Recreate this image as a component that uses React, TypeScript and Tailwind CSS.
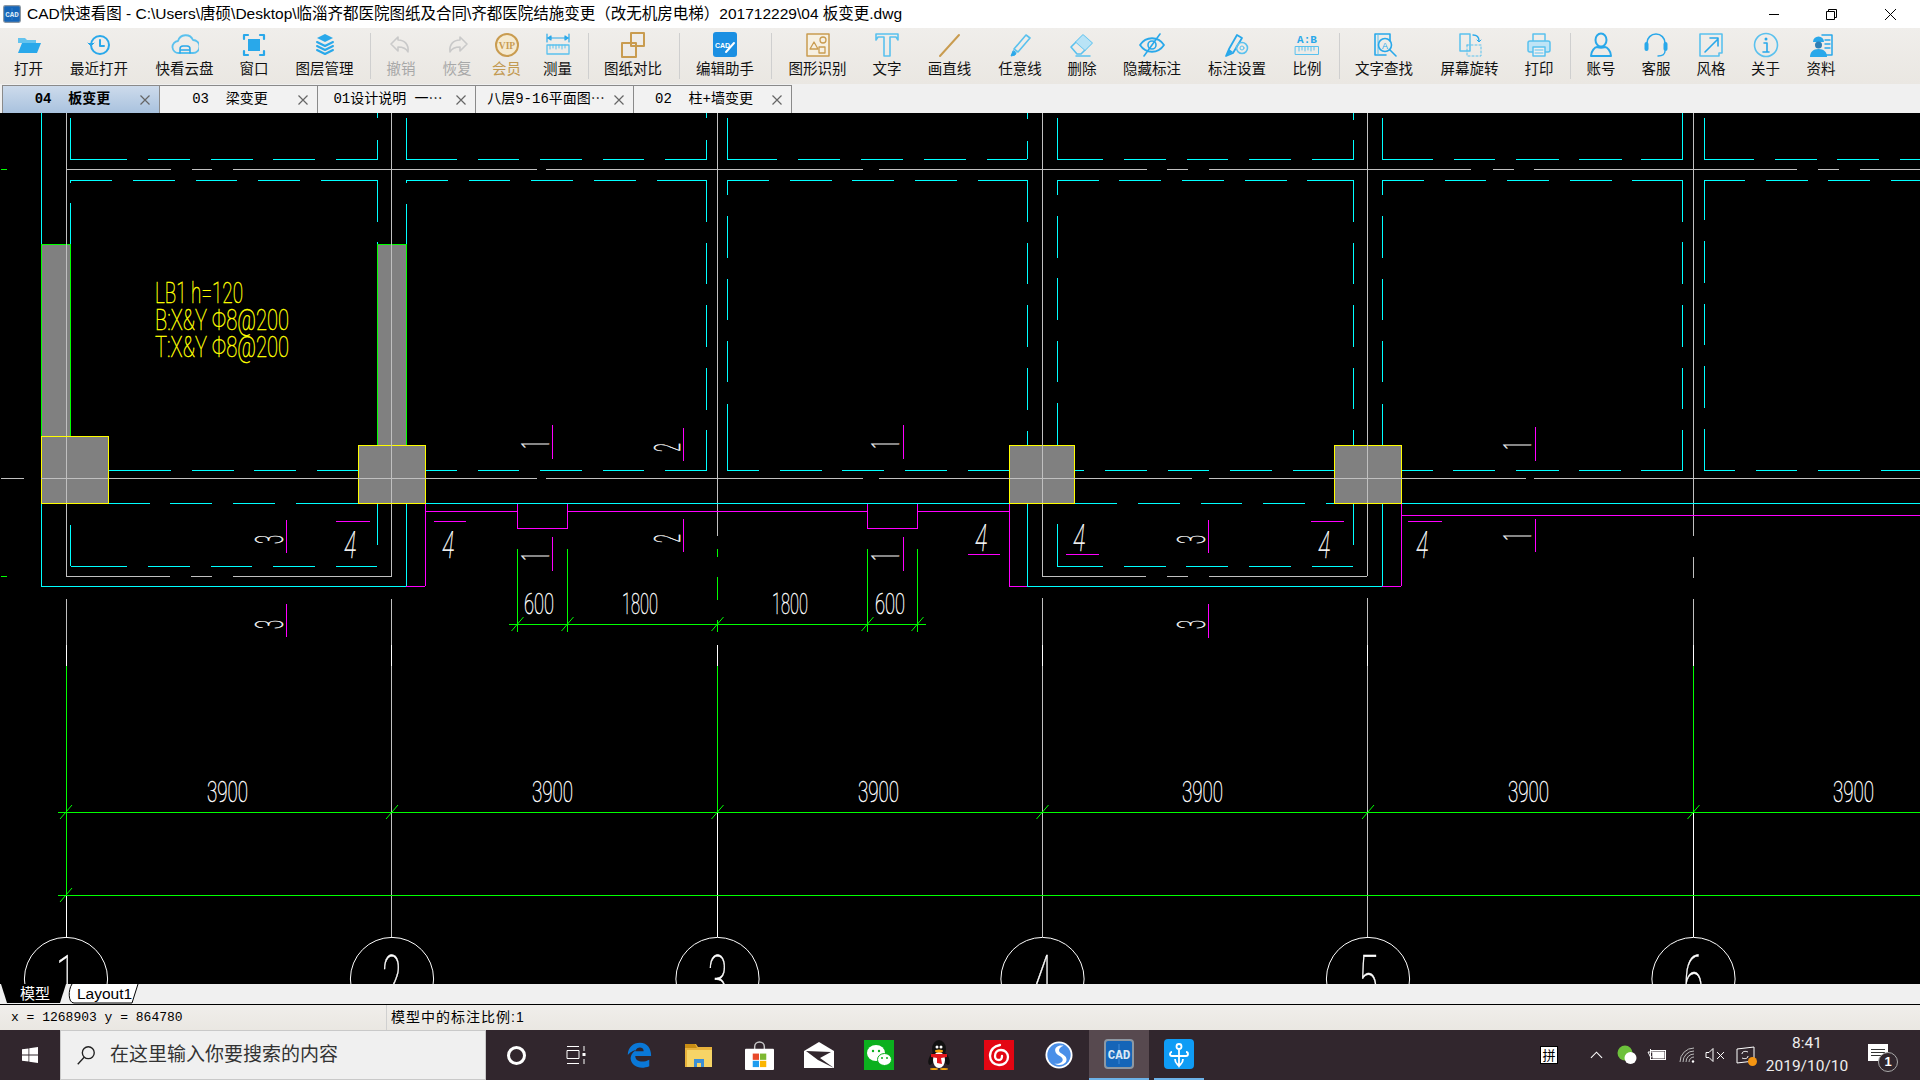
import React from "react";

const C = "#00ffff", G = "#c0c0c0", L = "#00ff00", M = "#ff00ff", W = "#ffffff", Y = "#ffff00";
type Seg = [number, number];
const H: [number, string, Seg[]][] = [
  [159, C, [[70,127],[148,190],[211,253],[273,315],[336,378],[406,457],[478,519],[540,582],[603,644],[665,707],[727,777],[798,840],[861,903],[924,966],[987,1027],[1057,1103],[1124,1166],[1187,1228],[1249,1291],[1312,1354],[1382,1433],[1454,1495],[1516,1559],[1579,1622],[1641,1683],[1704,1754],[1775,1817],[1837,1879],[1900,1920]]],
  [169, G, [[66,171],[192,212],[233,537],[546,863],[879,1147],[1167,1188],[1209,1471],[1493,1514],[1534,1797],[1818,1839],[1860,1920]]],
  [180, C, [[70,112],[133,175],[196,237],[258,300],[321,378],[406,448],[469,510],[531,573],[594,636],[657,707],[727,769],[790,832],[852,894],[915,957],[978,1027],[1057,1099],[1119,1161],[1182,1224],[1245,1287],[1307,1354],[1382,1424],[1445,1486],[1507,1549],[1570,1612],[1632,1683],[1704,1745],[1766,1808],[1828,1870],[1891,1920]]],
  [470, C, [[108,171],[192,234],[254,296],[317,358],[425,457],[478,519],[540,582],[603,644],[665,707],[727,759],[780,822],[842,884],[905,947],[968,1009],[1075,1084],[1105,1147],[1168,1209],[1230,1272],[1293,1334],[1401,1433],[1453,1495],[1516,1559],[1579,1621],[1641,1683],[1704,1735],[1756,1797],[1818,1860],[1881,1920]]],
  [478, G, [[1,24],[45,537],[546,863],[879,1192],[1209,1526],[1534,1920]]],
  [503, C, [[108,150],[170,212],[233,275],[296,358],[425,1009],[1075,1117],[1138,1180],[1201,1242],[1263,1305],[1326,1334],[1401,1920]]],
  [511, M, [[425,517],[567,867],[917,1009]]],
  [515, M, [[1401,1920]]],
  [521, M, [[336,370],[434,466],[1311,1344],[1408,1442]]],
  [528, M, [[517,568],[867,918]]],
  [554, M, [[968,1000],[1066,1099]]],
  [566, C, [[71,127],[148,190],[211,252],[273,315],[336,377],[1057,1103],[1124,1166],[1186,1228],[1249,1291],[1312,1353]]],
  [576, G, [[66,170],[191,212],[233,391],[1042,1146],[1167,1188],[1209,1367]]],
  [586, C, [[41,406],[1027,1382]]],
  [586, M, [[406,425],[1009,1027],[1382,1401]]],
  [169, L, [[1,7]]],
  [576, L, [[1,7]]],
  [624, L, [[509,926]]],
  [812, L, [[58,1920]]],
  [895, L, [[58,1920]]],
];
const V: [number, string, Seg[]][] = [
  [41, C, [[113,244],[503,586]]],
  [66, G, [[113,503],[503,577],[599,645]]],
  [66, W, [[645,666],[895,937]]],
  [66, L, [[666,895]]],
  [70, C, [[118,159],[180,183],[203,244],[525,566]]],
  [377, C, [[113,118],[140,159],[180,222],[242,244],[503,545]]],
  [391, G, [[113,577],[599,645],[666,937]]],
  [391, W, [[645,666]]],
  [406, C, [[118,159],[180,183],[204,244],[503,586]]],
  [425, M, [[503,586]]],
  [517, M, [[503,528]]],
  [567, M, [[503,528]]],
  [867, M, [[503,528]]],
  [917, M, [[503,528]]],
  [706, C, [[113,118],[140,159],[180,222],[243,284],[305,347],[368,410],[430,470]]],
  [727, C, [[118,159],[180,195],[216,258],[279,320],[341,382],[404,445],[430,470]]],
  [717, G, [[113,536]]],
  [717, W, [[645,666],[812,937]]],
  [717, L, [[549,557],[577,600],[620,632],[666,812]]],
  [517, L, [[549,632]]],
  [567, L, [[549,632]]],
  [867, L, [[549,632]]],
  [917, L, [[549,632]]],
  [1009, M, [[503,586]]],
  [1027, C, [[113,119],[141,159],[180,222],[243,284],[305,347],[368,410],[431,445],[503,586]]],
  [1042, G, [[113,576],[598,645],[666,937]]],
  [1042, W, [[645,666]]],
  [1057, C, [[118,159],[180,195],[216,258],[278,320],[341,382],[403,445],[524,566]]],
  [1353, C, [[113,120],[140,159],[180,222],[243,284],[305,347],[368,409],[430,445],[503,545]]],
  [1367, G, [[113,576],[598,645],[666,937]]],
  [1367, W, [[645,666]]],
  [1382, C, [[118,159],[180,195],[216,258],[279,320],[341,382],[404,445],[503,586]]],
  [1401, M, [[503,586]]],
  [1682, C, [[113,159],[180,222],[242,284],[305,347],[368,409],[430,470]]],
  [1693, G, [[113,536],[557,578],[599,645]]],
  [1693, W, [[645,666],[812,937]]],
  [1693, L, [[666,812]]],
  [1704, C, [[118,159],[180,220],[241,283],[304,345],[366,408],[429,470]]],
  [286, M, [[520,553],[604,637]]],
  [552, M, [[425,459],[537,571]]],
  [683, M, [[428,461],[519,552]]],
  [903, M, [[425,459],[537,571]]],
  [1208, M, [[520,553],[604,638]]],
  [1535, M, [[427,461],[519,552]]],
];

function CadText({ x, y, w, h, t, c = W, rot = 0, skew = 0 }: { x: number; y: number; w: number; h: number; t: string; c?: string; rot?: number; skew?: number }) {
  return (
    <text
      transform={`translate(${x} ${y}) rotate(${rot}) skewX(${skew})`}
      fontFamily="Roboto, 'Open Sans', sans-serif"
      fontWeight={100}
      fontSize={h / 0.72}
      textLength={w}
      lengthAdjust="spacingAndGlyphs"
      fill={c}
      stroke={c}
      strokeWidth={0.45}
    >
      {t}
    </text>
  );
}

function Drawing() {
  const grid = [66, 392, 717.5, 1042.5, 1368, 1693.5];
  const ticks: [number, number][] = [[517.5,624],[567.5,624],[717.5,624],[867.5,624],[917.5,624],...grid.map((x) => [x, 812] as [number, number]),[66,895]];
  return (
    <svg viewBox="0 113 1920 871" className="block w-[1920px] h-[871px] bg-black" >
      <g shapeRendering="crispEdges">
        <rect x={41.5} y={244.5} width={29} height={192} fill="#808080" stroke={L} />
        <rect x={377.5} y={244.5} width={29} height={201} fill="#808080" stroke={L} />
        {V.map(([x, c, s], i) => s.map(([a, b], j) => <line key={`v${i}-${j}`} x1={x + 0.5} x2={x + 0.5} y1={a} y2={b} stroke={c} />))}
        {H.map(([y, c, s], i) => s.map(([a, b], j) => <line key={`h${i}-${j}`} y1={y + 0.5} y2={y + 0.5} x1={a} x2={b} stroke={c} />))}
        {[[41.5,436.5,67,67],[358.5,445.5,67,58],[1009.5,445.5,65,58],[1334.5,445.5,67,58]].map(([x,y,w,h]) => (
          <rect key={x} x={x} y={y} width={w} height={h} fill="#808080" stroke={Y} />
        ))}
        {[66.5, 391.5, 1042.5, 1367.5].map((x) => <line key={x} x1={x} x2={x} y1={437} y2={503} stroke={G} />)}
        {[[41,108],[358,426],[1009,1075],[1334,1402]].map(([a,b]) => <line key={a} x1={a} x2={b} y1={478.5} y2={478.5} stroke={G} />)}
      </g>
      {ticks.map(([x, y], i) => <line key={i} x1={x - 6} y1={y + 7} x2={x + 6} y2={y - 7} stroke={L} />)}
      {grid.map((x, i) => (
        <g key={x}>
          <circle cx={x} cy={979} r={41.6} fill="none" stroke={W} />
          <CadText x={x - 10} y={1004} w={20} h={50} t={String(i + 1)} />
        </g>
      ))}
      <CadText x={155} y={303} w={88} h={21} t="LB1 h=120" c={Y} />
      <CadText x={155} y={330} w={134} h={21} t="B:X&Y Φ8@200" c={Y} />
      <CadText x={155} y={357} w={134} h={21} t="T:X&Y Φ8@200" c={Y} />
      <CadText x={524} y={614} w={30} h={21} t="600" />
      <CadText x={622} y={614} w={36} h={21} t="1800" />
      <CadText x={772} y={614} w={36} h={21} t="1800" />
      <CadText x={875} y={614} w={30} h={21} t="600" />
      {[207, 532, 858, 1182, 1508, 1833].map((x) => <CadText key={x} x={x} y={802} w={41} h={21} t="3900" />)}
      {[[549,449],[549,561],[899,449],[899,561],[1531,450],[1531,541]].map(([x,y],i) => <CadText key={`o${i}`} x={x} y={y} w={9} h={28} t="1" rot={-90} />)}
      {[[680,452],[680,543]].map(([x,y],i) => <CadText key={`t${i}`} x={x} y={y} w={9} h={27} t="2" rot={-90} />)}
      {[[283,544],[283,629],[1205,544],[1205,629]].map(([x,y],i) => <CadText key={`m${i}`} x={x} y={y} w={9} h={28} t="3" rot={-90} />)}
      {[[343,558],[441,558],[974,551],[1072,551],[1317,558],[1415,558]].map(([x,y],i) => <CadText key={`f${i}`} x={x} y={y} w={12} h={27} t="4" skew={-6} />)}
    </svg>
  );
}

const B = "#29a8ea", B2 = "#5ac1ee", O = "#c99c50", D = "#c9c9c9";
const Ic = ({ children }: { children: React.ReactNode }) => (
  <svg viewBox="0 0 28 28" className="w-[28px] h-[28px]" fill="none" strokeLinecap="round" strokeLinejoin="round">{children}</svg>
);
const icons: Record<string, React.ReactNode> = {
  open: <><path d="M3 7h7l2 2h9v3H3z" fill="#64c3ee" /><path d="M3 22l4-10h19l-4 10z" fill={B} /></>,
  recent: <><circle cx="15" cy="14" r="9" stroke={B} strokeWidth="2" /><path d="M15 9v6h4" stroke={B} strokeWidth="2" /><path d="M3 12l3 3 3-3" fill={B} stroke={B} /></>,
  cloud: <><path d="M8 22a6 6 0 0 1-1-12 8 8 0 0 1 15-1 6.5 6.5 0 0 1 0 13z" stroke={B2} strokeWidth="1.8" /><path d="M9 22v-4a3 3 0 0 1 3-3h4a3 3 0 0 1 3 3v4M9 19h10" stroke={B} strokeWidth="1.5" /></>,
  win: <><rect x="8" y="8" width="12" height="12" fill={B} /><path d="M4 8V4h4M20 4h4v4M24 20v4h-4M8 24H4v-4" stroke={B} strokeWidth="2.2" /></>,
  layers: <><path d="M14 3l8 4-8 4-8-4z" fill={B} /><path d="M6 11l8 4 8-4M6 15l8 4 8-4M6 19l8 4 8-4" stroke={B} strokeWidth="2" /></>,
  undo: <path d="M11 6L4 13l7 7v-4c5 0 8 1 10 5 1-7-3-12-10-12z" stroke={D} strokeWidth="1.6" />,
  redo: <path d="M17 6l7 7-7 7v-4c-5 0-8 1-10 5-1-7 3-12 10-12z" stroke={D} strokeWidth="1.6" />,
  vip: <><circle cx="14" cy="14" r="11" stroke={O} strokeWidth="2" fill="#f5ead0" /><text x="14" y="17.5" textAnchor="middle" fontSize="9.5" fontWeight="700" fontFamily="'Liberation Serif', serif" fill={O}>VIP</text></>,
  measure: <><path d="M3 3v8M25 3v8M4 7h20M4 7l3-2v4zM24 7l-3-2v4z" stroke={B} strokeWidth="1.2" /><path d="M3 14h22v9H3z" stroke={B2} strokeWidth="1.3" /><path d="M6 14v4M9 14v3M12 14v4M15 14v3M18 14v4M21 14v3" stroke={B2} /></>,
  compare: <><rect x="12" y="2" width="13" height="13" stroke={O} strokeWidth="2" /><rect x="3" y="12" width="14" height="14" stroke={O} strokeWidth="2" /></>,
  edit: <><rect x="2" y="1" width="24" height="25" rx="3" fill="#1b8fe2" /><text x="11.5" y="16.5" textAnchor="middle" fontSize="7" fontWeight="700" fontFamily="'Liberation Sans', sans-serif" fill="#fff">CAD</text><path d="M15 21l8-9" stroke="#fff" strokeWidth="2" /></>,
  shape: <><rect x="3" y="3" width="22" height="22" stroke={O} strokeWidth="1.5" fill="#f6f0e2" /><path d="M10 11l4 7H6z" stroke={O} strokeWidth="1.3" /><circle cx="19" cy="9" r="3" stroke={O} strokeWidth="1.3" /><rect x="15" y="16" width="6" height="6" stroke={O} strokeWidth="1.3" /></>,
  text: <path d="M3 3h22v6l-2-3h-6v19h-6V6H5L3 9z" stroke={B2} strokeWidth="1.6" />,
  line: <path d="M4 25L23 4" stroke={O} strokeWidth="2" />,
  pen: <><path d="M8 18L20 4l4 3-12 14z" stroke={B2} strokeWidth="1.6" /><path d="M7 20l-2 5 4-1 1-2z" fill={B} stroke={B} /></>,
  erase: <><path d="M3 16L15 4l9 8-11 11H9z" stroke={B2} strokeWidth="1.6" /><path d="M8 11l9 8M8 25h14" stroke={B2} strokeWidth="1.5" /><path d="M15 4l9 8-7 7-9-8z" fill="#b9e3f6" /></>,
  eye: <><path d="M2 14c6-9 18-9 24 0-6 9-18 9-24 0z" stroke={B} strokeWidth="1.8" /><circle cx="14" cy="14" r="4" stroke={B} strokeWidth="1.6" /><path d="M6 25L22 3" stroke={B} strokeWidth="1.6" /></>,
  penGear: <><path d="M3 25l3-7 8-14 5 3-9 15z" stroke={B} strokeWidth="1.8" /><path d="M3 25l3-7 4 3z" fill={B} /><circle cx="19" cy="17" r="5.5" stroke={B2} strokeWidth="1.6" /><circle cx="19" cy="17" r="2" stroke={B2} /></>,
  ratio: <><text x="14" y="12" textAnchor="middle" fontSize="11" fontWeight="700" fontFamily="'Liberation Mono', monospace" fill={B}>A:B</text><rect x="2.5" y="15.5" width="23" height="8" stroke={B2} /><path d="M6 16v4M9 16v3M12 16v4M15 16v3M18 16v4M21 16v3" stroke={B2} /></>,
  find: <><path d="M5 3h15v7M5 3v21h11" stroke={B} strokeWidth="1.6" /><path d="M8 3v21" stroke={B2} /><circle cx="15" cy="14" r="6.5" stroke={B} strokeWidth="1.6" /><text x="15" y="17.5" textAnchor="middle" fontSize="9" fontFamily="'Liberation Sans', sans-serif" fill={B}>A</text><path d="M20 19l6 6" stroke={B} strokeWidth="1.6" /></>,
  rotate: <><rect x="4" y="3" width="10" height="17" stroke={B2} strokeWidth="1.5" /><path d="M11 14h14v11H11z" stroke={B2} strokeDasharray="2 2" /><path d="M17 4c4 0 6 2 6 6" stroke={B} strokeWidth="1.4" /><path d="M21 9l2 2 2-2" stroke={B} /></>,
  print: <><path d="M8 10V3h12v7" stroke={B2} strokeWidth="1.5" /><rect x="3" y="10" width="22" height="11" rx="2" fill="#bfe4f6" stroke={B2} strokeWidth="1.5" /><rect x="8" y="16" width="12" height="9" fill="#f0f0f0" stroke={B2} strokeWidth="1.5" /><path d="M10 19h8M10 22h8" stroke={B2} /></>,
  user: <><ellipse cx="14" cy="9" rx="5.5" ry="6.5" stroke={B} strokeWidth="2" /><path d="M4 25c0-5 4-9 6-9 3 1 5 1 8 0 2 0 6 4 6 9z" stroke={B} strokeWidth="2" /></>,
  head: <><path d="M5 14V12a9 9 0 0 1 18 0v2" stroke={B} strokeWidth="1.6" /><rect x="2.5" y="11" width="4" height="9" rx="2" fill={B} /><rect x="21.5" y="11" width="4" height="9" rx="2" fill={B} /><path d="M23 20c0 3-2 5-7 5" stroke={B} strokeWidth="1.4" /></>,
  style: <><path d="M3 3h22v19h-3M3 3v22h19v-3" stroke={B2} strokeWidth="1.6" /><path d="M8 21L21 8M13 7h8v8" stroke={B} strokeWidth="1.6" /></>,
  info: <><circle cx="14" cy="14" r="11.5" stroke={B2} strokeWidth="1.6" /><circle cx="14" cy="8" r="1.5" fill={B} /><path d="M12 12h3v9M11 21h6" stroke={B} strokeWidth="1.6" /></>,
  worker: <><path d="M15 4h10v20H16" stroke={B} strokeWidth="1.5" /><path d="M18 9h5M18 13h5M18 17h5" stroke={B} strokeWidth="1.4" /><path d="M6 11a5.5 5.5 0 0 1 11 0z" fill={B} /><circle cx="11.5" cy="14" r="3.5" fill="#2f7fb5" /><path d="M3 26c0-5 3-8 8.500-8s8.500 3 8.500 8z" fill={B} /></>,
};

type Item = { k?: string; l?: string; w: string; c?: string };
const tools: Item[] = [
  { k: "open", l: "打开", w: "w-[57px]" }, { k: "recent", l: "最近打开", w: "w-[84px]" }, { k: "cloud", l: "快看云盘", w: "w-[87px]" }, { k: "win", l: "窗口", w: "w-[52px]" }, { k: "layers", l: "图层管理", w: "w-[89px]" },
  { w: "w-[3px]" },
  { k: "undo", l: "撤销", w: "w-[58px]", c: "text-[#a8a8a8]" }, { k: "redo", l: "恢复", w: "w-[54px]", c: "text-[#a8a8a8]" }, { k: "vip", l: "会员", w: "w-[45px]", c: "text-[#c29a52]" }, { k: "measure", l: "测量", w: "w-[57px]" },
  { w: "w-[5px]" },
  { k: "compare", l: "图纸对比", w: "w-[84px]" },
  { w: "w-[9px]" },
  { k: "edit", l: "编辑助手", w: "w-[82px]" },
  { w: "w-[11px]" },
  { k: "shape", l: "图形识别", w: "w-[81px]" }, { k: "text", l: "文字", w: "w-[58px]" }, { k: "line", l: "画直线", w: "w-[67px]" }, { k: "pen", l: "任意线", w: "w-[74px]" }, { k: "erase", l: "删除", w: "w-[50px]" }, { k: "eye", l: "隐藏标注", w: "w-[90px]" }, { k: "penGear", l: "标注设置", w: "w-[80px]" }, { k: "ratio", l: "比例", w: "w-[60px]" },
  { w: "w-[4px]" },
  { k: "find", l: "文字查找", w: "w-[86px]" }, { k: "rotate", l: "屏幕旋转", w: "w-[85px]" }, { k: "print", l: "打印", w: "w-[54px]" },
  { w: "w-[9px]" },
  { k: "user", l: "账号", w: "w-[52px]" }, { k: "head", l: "客服", w: "w-[58px]" }, { k: "style", l: "风格", w: "w-[52px]" }, { k: "info", l: "关于", w: "w-[57px]" }, { k: "worker", l: "资料", w: "w-[54px]" },
];

const CadLogo = ({ s }: { s: string }) => (
  <svg viewBox="0 0 30 30" className={s}>
    <rect x="1" y="1" width="28" height="28" rx="3" fill="#1565b8" stroke="#8d98a3" strokeWidth="2" />
    <path d="M15 5v20M6 15h18" stroke="#3f8ad6" strokeWidth="1" />
    <text x="15" y="20" textAnchor="middle" fontSize="12.5" fontWeight="700" fontFamily="'Liberation Mono', monospace" fill="#dbe8f5">CAD</text>
  </svg>
);

const tabs = [
  { t: "04  板变更", a: true },
  { t: "03  梁变更" },
  { t: "01设计说明 一⋯" },
  { t: "八层9-16平面图⋯" },
  { t: "02  柱+墙变更" },
];

const TB = ({ children, w = "w-[60px]", c = "" }: { children: React.ReactNode; w?: string; c?: string }) => (
  <div className={`${w} ${c} h-full flex items-center justify-center shrink-0`}>{children}</div>
);

export default function App() {
  return (
    <div className="w-[1920px] h-[1080px] overflow-hidden flex flex-col bg-white text-black font-['Liberation_Sans','Noto_Sans_CJK_SC',sans-serif]">
      <div className="h-[28px] flex items-center shrink-0 bg-white">
        <CadLogo s="w-[20px] h-[18px] ml-[2px] mr-[5px]" />
        <div className="text-[15.5px] leading-[28px] whitespace-nowrap w-[1700px]">CAD快速看图 - C:\Users\唐硕\Desktop\临淄齐都医院图纸及合同\齐都医院结施变更（改无机房电梯）201712229\04 板变更.dwg</div>
        <div className="ml-auto flex items-center h-full">
          <div className="w-[56px] flex justify-center"><span className="w-[10px] h-px bg-black" /></div>
          <div className="w-[58px] flex justify-center">
            <svg viewBox="0 0 11 11" className="w-[11px] h-[11px]" fill="none" stroke="#000"><path d="M.5 2.5h8v8h-8zM2.5 2.5v-2h8v8h-2" /></svg>
          </div>
          <div className="w-[60px] flex justify-center">
            <svg viewBox="0 0 11 11" className="w-[11px] h-[11px]" stroke="#000"><path d="M0 0l11 11M11 0L0 11" /></svg>
          </div>
        </div>
      </div>

      <div className="h-[56px] flex shrink-0 bg-gradient-to-b from-[#f0eeeb] to-[#eae7e2] text-[14.5px] text-[#111]">
        {tools.map((t, i) =>
          t.k ? (
            <div key={i} className={`${t.w} shrink-0 flex flex-col items-center pt-[3px] ${t.c ?? ""}`}>
              <Ic>{icons[t.k]}</Ic>
              <span className="leading-[20px] whitespace-nowrap">{t.l}</span>
            </div>
          ) : (
            <div key={i} className={`${t.w} shrink-0 flex justify-center py-[5px]`}><span className="w-px h-[46px] bg-[#cfcfcf]" /></div>
          )
        )}
      </div>

      <div className="h-[29px] flex items-end bg-[#f0f0f0] pl-[2px] shrink-0">
        {tabs.map((t) => (
          <div key={t.t} className={`w-[158px] h-[28px] flex items-center border-t border-r border-[#8a8a8a] text-[14px] ${t.a ? "bg-gradient-to-b from-[#cddbec] to-[#a9c2de] font-bold border-l border-[#7da2ce]" : "bg-[#f2f2f2]"}`}>
            <span className="flex-1 text-center whitespace-pre pl-[2px] font-['Liberation_Mono','Noto_Sans_CJK_SC',monospace]">{t.t}</span>
            <svg viewBox="0 0 10 10" className="w-[10px] h-[10px] mr-[9px]" stroke="#666" strokeWidth="1.2"><path d="M.5 .5l9 9M9.5 .5l-9 9" /></svg>
          </div>
        ))}
      </div>

      <div className="h-[871px] shrink-0 overflow-hidden"><Drawing /></div>

      <div className="h-[21px] shrink-0 bg-[#f0f0f0] border-b border-black flex items-center relative text-[15px]">
        <svg viewBox="0 0 140 20" className="absolute left-0 top-0 w-[140px] h-[20px]">
          <path d="M1 0l6 19h53l6-19z" fill="#000" />
          <path d="M72 0c-4 6-4 19 2 19h58l6-19" fill="#fff" stroke="#000" />
        </svg>
        <span className="relative ml-[20px] w-[57px] text-white leading-[20px]">模型</span>
        <span className="relative leading-[20px] text-[15.5px]">Layout1</span>
      </div>

      <div className="h-[25px] shrink-0 bg-gradient-to-b from-[#f0eeeb] to-[#eae7e2] flex items-center text-[14px]">
        <span className="w-[386px] pl-[11px] font-['Liberation_Mono',monospace] text-[13px] whitespace-pre">x = 1268903 y = 864780</span>
        <span className="h-full w-px bg-[#d0d0d0] mr-[4px]" />
        <span className="tracking-[1px]">模型中的标注比例:1</span>
      </div>

      <div className="h-[50px] shrink-0 bg-[#31262d] flex items-center text-white relative">
        <div className="w-[60px] h-full flex items-center justify-center">
          <svg viewBox="0 0 16 16" className="w-[16px] h-[16px]" fill="#fff"><path d="M0 2.3l6.5-.9v6.200H0zM7.300 1.300L16 0v7.600H7.300zM0 8.400h6.500v6.200L0 13.700zM7.300 8.400H16V16l-8.700-1.200z" /></svg>
        </div>
        <div className="w-[426px] h-full bg-[#f0f0f0] border border-[#c9c9c9] flex items-center text-[#333]">
          <svg viewBox="0 0 24 24" className="w-[22px] h-[22px] ml-[14px] mr-[13px]" fill="none" stroke="#222" strokeWidth="1.5"><circle cx="14.5" cy="9.5" r="6.5" /><path d="M10 14.5L3 22" /></svg>
          <span className="text-[19px] whitespace-nowrap">在这里输入你要搜索的内容</span>
        </div>
        <TB><span className="w-[19px] h-[19px] rounded-full border-[3px] border-white" /></TB>
        <TB>
          <svg viewBox="0 0 20 20" className="w-[20px] h-[20px]" stroke="#fff" fill="none"><path d="M1 1.500h12M1 5.500h12v8H1zM1 18.500h12M18 1v5M18 14v5" /><rect x="16.5" y="8" width="3" height="3" fill="#fff" stroke="none" /></svg>
        </TB>
        <TB c="ml-[3px]">
          <svg viewBox="0 0 30 30" className="w-[28px] h-[28px]"><path d="M3 15C3 7 9 2 16 2c8 0 12 6 12 14H11c0 6 8 8 15 4v7c-10 4-19 0-20-8 0-4 3-8 6-9-4 0-7 3-9 5zM20 11c0-3-2-4-4-4s-4 1-5 4z" fill="#0a78d7" /></svg>
        </TB>
        <TB>
          <svg viewBox="0 0 28 26" className="w-[28px] h-[26px]"><path d="M0 2h11l2 3h14v20H0z" fill="#e8b33c" /><path d="M0 2h10l2 4H0z" fill="#c88d14" /><path d="M2 8h25v17H2z" fill="#f6d466" /><path d="M9 25v-8h10v8h-3v-4h-4v4z" fill="#3b8fd6" /></svg>
        </TB>
        <TB>
          <svg viewBox="0 0 30 30" className="w-[29px] h-[29px]"><path d="M10 9V6a5 5 0 0 1 10 0v3" fill="none" stroke="#c8c8c8" strokeWidth="1.5" /><rect x="0" y="8" width="30" height="22" rx="1" fill="#fff" /><rect x="8" y="13" width="6.5" height="6.5" fill="#e8492a" /><rect x="15.5" y="13" width="6.5" height="6.5" fill="#7eb831" /><rect x="8" y="20.5" width="6.5" height="6.5" fill="#1f9cef" /><rect x="15.5" y="20.5" width="6.5" height="6.5" fill="#fbb500" /></svg>
        </TB>
        <TB>
          <svg viewBox="0 0 30 26" className="w-[30px] h-[26px]"><path d="M0 9L15 0l15 9v17H0z" fill="#fff" /><path d="M2 9l25 1-11 6 14 10-16-8z" fill="#31262d" /></svg>
        </TB>
        <TB>
          <svg viewBox="0 0 30 30" className="w-[30px] h-[30px]"><rect width="30" height="30" fill="#0bb01e" /><ellipse cx="12" cy="13" rx="9" ry="8" fill="#fff" /><ellipse cx="20.5" cy="19.5" rx="7" ry="6" fill="#fff" stroke="#0bb01e" /><circle cx="9" cy="11" r="1.2" fill="#0bb01e" /><circle cx="15" cy="11" r="1.2" fill="#0bb01e" /><circle cx="18" cy="18" r="1" fill="#0bb01e" /><circle cx="23" cy="18" r="1" fill="#0bb01e" /></svg>
        </TB>
        <TB>
          <svg viewBox="0 0 24 30" className="w-[24px] h-[30px]"><ellipse cx="12" cy="9" rx="7" ry="9" fill="#111" /><path d="M5 13C1 18 0 24 3 25l3-2c1 4 11 4 12 0l3 2c3-1 2-7-2-12z" fill="#111" /><ellipse cx="12" cy="20" rx="6" ry="8" fill="#fff" /><path d="M4 14h16v3l-6 1 1 6-5-1v-5l-6-1z" fill="#e3171c" /><ellipse cx="12" cy="11" rx="4" ry="1.5" fill="#f5a60c" /><circle cx="10" cy="7" r="1.5" fill="#fff" /><circle cx="14" cy="7" r="1.5" fill="#fff" /><ellipse cx="7" cy="29" rx="4" ry="1" fill="#f5a60c" /><ellipse cx="17" cy="29" rx="4" ry="1" fill="#f5a60c" /></svg>
        </TB>
        <TB>
          <svg viewBox="0 0 30 30" className="w-[30px] h-[30px]"><rect width="30" height="30" fill="#e30613" /><path d="M16 5c-6 1-10 5-10 11 0 5 4 9 9 9 6 0 9-4 9-8s-3-7-7-7-6 3-6 6 2 4 4 4 3-2 3-4" fill="none" stroke="#fff" strokeWidth="2.3" strokeLinecap="round" /></svg>
        </TB>
        <TB>
          <svg viewBox="0 0 30 30" className="w-[28px] h-[28px]"><circle cx="15" cy="15" r="14.5" fill="#fff" /><circle cx="15" cy="15" r="12.5" fill="#4a8fe8" /><path d="M20 5c-6-1-10 2-9 6 1 5 8 5 8 9 0 3-4 5-9 4 7 4 14 0 13-5-1-5-8-5-8-9 0-2 2-4 5-5z" fill="#fff" /></svg>
        </TB>
        <div className="w-[60px] h-full shrink-0 bg-[#57494f] border-b-[2px] border-[#6cb2e8] flex items-center justify-center"><CadLogo s="w-[30px] h-[30px]" /></div>
        <TB c="border-b-[2px] border-transparent relative">
          <svg viewBox="0 0 30 30" className="w-[30px] h-[30px]"><rect width="30" height="30" rx="4" fill="#0f9cf5" /><path d="M15 5a2.5 2.5 0 0 1 0 5 2.500 2.500 0 0 1 0-5zM15 10v17M8 13a2 2 0 0 0 0 4h14a2 2 0 0 0 0-4M11 20c0 5 3 5 4 7 1-2 4-2 4-7" fill="none" stroke="#fff" strokeWidth="1.8" /></svg>
          <span className="absolute bottom-[-2px] left-[5px] w-[50px] h-[2px] bg-[#6cb2e8]" />
        </TB>

        <TB w="w-[18px]" c="ml-[331px]">
          <span className="w-[18px] h-[18px] bg-white border border-black text-black text-[13px] leading-[16px] text-center font-['Noto_Sans_CJK_SC',sans-serif]">拼</span>
        </TB>
        <svg viewBox="0 0 14 8" className="w-[13px] h-[8px] ml-[32px]" fill="none" stroke="#fff" strokeWidth="1.2"><path d="M1 7l6-6 6 6" /></svg>
        <svg viewBox="0 0 20 20" className="w-[20px] h-[20px] ml-[14px]"><circle cx="8" cy="8" r="7.5" fill="#6dc13b" /><circle cx="13.5" cy="13" r="6" fill="#fff" /></svg>
        <svg viewBox="0 0 20 14" className="w-[20px] h-[14px] ml-[10px]" fill="none" stroke="#fff"><path d="M3.500 1v3M1 4h5v3c0 1-1 2-2.500 2z" /><rect x="3.5" y="2.5" width="15" height="9" /><rect x="6" y="4" width="11" height="6" fill="#fff" /></svg>
        <svg viewBox="0 0 16 16" className="w-[16px] h-[16px] ml-[12px]" fill="none" stroke="#bbb" strokeWidth="1"><path d="M1 15A14 14 0 0 1 15 1M4 15A11 11 0 0 1 15 4M7 15a8 8 0 0 1 8-8M10 15a5 5 0 0 1 5-5" /><circle cx="14" cy="14.5" r="1.2" fill="#fff" stroke="none" /></svg>
        <svg viewBox="0 0 20 14" className="w-[20px] h-[14px] ml-[10px]" fill="none" stroke="#fff"><path d="M1 4.500h3l4-4v13l-4-4H1zM12 4l7 7M19 4l-7 7" /></svg>
        <div className="relative ml-[11px] w-[19px] h-[18px]">
          <svg viewBox="0 0 19 18" className="w-[19px] h-[18px]" fill="none" stroke="#fff"><path d="M1 3l17-2v14l-17 2z" /><path d="M6 8c0-3 4-3 6-2M12 10c0 3-4 3-6 2" /></svg>
          <span className="absolute w-[9px] h-[9px] rounded-full bg-[#f59512] right-[-2px] bottom-[-2px]" />
        </div>
        <div className="w-[84px] ml-[10px] mr-[19px] flex flex-col items-center text-[15.5px] leading-[23px] font-['Roboto',sans-serif] text-[#eee] whitespace-nowrap">
          <span>8:41</span>
          <span>2019/10/10</span>
        </div>
        <div className="relative w-[20px] h-[17px] -mt-[5px] bg-white flex flex-col justify-center gap-[2px] px-[3px]">
          <span className="h-px bg-[#333]" /><span className="h-px bg-[#333]" /><span className="h-px bg-[#333]" />
          <span className="absolute w-[20px] h-[20px] rounded-full bg-[#31262d] border border-[#aaa] text-[13px] leading-[18px] text-center text-white right-[-10px] bottom-[-11px] font-bold">1</span>
        </div>
      </div>
    </div>
  );
}
